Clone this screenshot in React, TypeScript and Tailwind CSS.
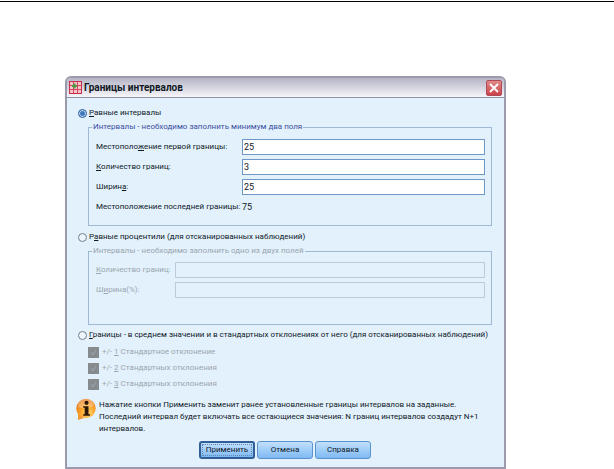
import { useState } from "react";
import type { ReactNode } from "react";

type Mode = "intervals" | "percentiles" | "deviations";

const DEVIATIONS = [
  { key: "1", text: "Стандартное отклонение" },
  { key: "2", text: "Стандартных отклонения" },
  { key: "3", text: "Стандартных отклонения" },
];

const GridIcon = () => (
  <svg width="13" height="13" viewBox="0 0 13 13" className="shrink-0">
    <rect x="0.5" y="0.5" width="12" height="12" fill="#f7c3ca" stroke="#c62f48" />
    <path d="M4.5 1v11M8.5 1v11M1 4.5h11M1 8.5h11" stroke="#d8455e" />
    <path d="M5.5 2.5v5M3 5h5" stroke="#4d9a43" strokeWidth="2" />
  </svg>
);

const CloseIcon = () => (
  <svg width="10" height="10" viewBox="0 0 10 10">
    <path d="M1 1l8 8M9 1l-8 8" stroke="#fff" strokeWidth="1.8" />
  </svg>
);

const InfoIcon = () => (
  <svg width="20" height="23" viewBox="0 0 20 23" className="shrink-0">
    <defs>
      <radialGradient id="info" cx="0.6" cy="0.75" r="0.75">
        <stop offset="0" stopColor="#ffd873" />
        <stop offset="0.5" stopColor="#fba62c" />
        <stop offset="1" stopColor="#e5730f" />
      </radialGradient>
    </defs>
    <path d="M2 15v7l6-2z" fill="#f3992f" />
    <circle cx="10" cy="10.5" r="9.7" fill="url(#info)" />
    <path d="M2 9a8 8 0 0 1 16-1q-8 4-16 1z" fill="#fff" opacity="0.3" />
    <circle cx="10.5" cy="4.8" r="2.1" fill="#2c1606" />
    <path d="M7.2 8.2h5.3v8h1.5v1.6H7.2v-1.6h1.5V9.8H7.2z" fill="#2c1606" />
  </svg>
);

const CheckMark = () => (
  <svg width="7" height="7" viewBox="0 0 7 7" className="pointer-events-none col-start-1 row-start-1">
    <path d="M1 3l2 3 3-5" fill="none" stroke="#a0a5a8" />
  </svg>
);

interface ModeRadioProps {
  value: Mode;
  mode: Mode;
  onChange: (mode: Mode) => void;
  children: ReactNode;
}

const ModeRadio = ({ value, mode, onChange, children }: ModeRadioProps) => (
  <label className="flex h-3 items-center gap-[2px] whitespace-nowrap">
    <input
      type="radio"
      name="mode"
      checked={mode === value}
      onChange={() => onChange(value)}
      className="size-[9px] shrink-0 appearance-none rounded-full border border-[#6f7f8e] bg-[#eef5fa] checked:border-[#3f6ea8] checked:bg-[#3f78bd] checked:shadow-[inset_0_0_0_1px_#c5dcf0]"
    />
    <span>{children}</span>
  </label>
);

interface FieldProps {
  id: string;
  label: ReactNode;
  value: string;
  onChange: (value: string) => void;
}

const Field = ({ id, label, value, onChange }: FieldProps) => (
  <div className="flex items-center">
    <label htmlFor={id} className="w-[146px] shrink-0 whitespace-nowrap">
      {label}
    </label>
    <input
      id={id}
      value={value}
      onChange={(e) => onChange(e.target.value)}
      className="h-4 min-w-0 flex-1 border border-[#6f98c8] bg-white px-px text-[9px]"
    />
  </div>
);

const App = () => {
  const [mode, setMode] = useState<Mode>("intervals");
  const [first, setFirst] = useState("25");
  const [count, setCount] = useState("3");
  const [width, setWidth] = useState("25");

  const last = Number(first) + (Number(count) - 1) * Number(width);
  const buttonClass =
    "h-[18px] w-14 rounded-[3px] border border-[#5b93cc] bg-linear-to-b from-[#c3e0fa] via-[#9fcdf8] to-[#7fb9f3]";

  return (
    <div className="bg-white pt-px font-[Roboto,'Liberation_Sans',sans-serif] text-[8px] leading-3 text-[#10181f]">
      <hr className="border-black" />
      <div className="pt-[74px] pr-[108px] pl-[65px]">
        <div className="rounded-t-md border-2 border-[#9c9bae] bg-[#e2f1fc]">
          <header className="flex h-5 items-center gap-[2px] rounded-t border-b border-[#8d94a8] bg-linear-to-b from-[#b5b4c6] to-[#f6f6fa] px-[2px]">
            <GridIcon />
            <h1 className="flex-1 text-[10px] font-bold">Границы интервалов</h1>
            <button
              aria-label="Закрыть"
              className="grid size-4 place-items-center rounded-[2px] border border-[#b04a58] bg-linear-to-b from-[#e08a8a] to-[#cc3f48]"
            >
              <CloseIcon />
            </button>
          </header>

          <form className="pt-[9px] pr-3 pb-2 pl-[11px]" onSubmit={(e) => e.preventDefault()}>
            <ModeRadio value="intervals" mode={mode} onChange={setMode}>
              <u>Р</u>авные интервалы
            </ModeRadio>
            <fieldset className="mt-[2px] ml-[10px] border border-[#9db9d3] pr-[6px] pb-[10px] pl-[7px]">
              <legend className="-ml-1 px-px text-[#3c4fa0]">
                Интервалы - необходимо заполнить минимум два поля
              </legend>
              <div className="flex flex-col gap-1 pt-[6px]">
                <Field
                  id="first"
                  label={<>Местополо<u>ж</u>ение первой границы:</>}
                  value={first}
                  onChange={setFirst}
                />
                <Field
                  id="count"
                  label={<><u>К</u>оличество границ:</>}
                  value={count}
                  onChange={setCount}
                />
                <Field
                  id="width"
                  label={<>Ширин<u>а</u>:</>}
                  value={width}
                  onChange={setWidth}
                />
                <div className="flex h-4 items-center">
                  <span className="w-[146px] whitespace-nowrap">Местоположение последней границы:</span>
                  <output className="text-[9px]">{last}</output>
                </div>
              </div>
            </fieldset>

            <div className="mt-[5px]">
              <ModeRadio value="percentiles" mode={mode} onChange={setMode}>
                Р<u>а</u>вные процентили (для отсканированных наблюдений)
              </ModeRadio>
            </div>
            <fieldset
              disabled
              className="mt-[2px] ml-[10px] border border-[#9db9d3] pr-[6px] pb-[26px] pl-[7px] text-[#9ba5ae]"
            >
              <legend className="-ml-1 px-px">Интервалы - необходимо заполнить одно из двух полей</legend>
              <div className="flex flex-col gap-1 pt-[5px]">
                <div className="flex items-center">
                  <label htmlFor="pcount" className="w-[79px] shrink-0 whitespace-nowrap">
                    <u>К</u>оличество границ:
                  </label>
                  <input id="pcount" className="h-4 min-w-0 flex-1 border border-[#bccbd7]" />
                </div>
                <div className="flex items-center">
                  <label htmlFor="pwidth" className="w-[79px] shrink-0 whitespace-nowrap">
                    Ш<u>и</u>рина(%):
                  </label>
                  <input id="pwidth" className="h-4 min-w-0 flex-1 border border-[#bccbd7]" />
                </div>
              </div>
            </fieldset>

            <div className="mt-1">
              <ModeRadio value="deviations" mode={mode} onChange={setMode}>
                <u>Г</u>раницы - в среднем значении и в стандартных отклонениях от него (для отсканированных наблюдений)
              </ModeRadio>
            </div>
            <div className="mt-[5px] ml-[10px] flex flex-col gap-1 text-[#9ba5ae]">
              {DEVIATIONS.map((item) => (
                <label key={item.key} className="flex h-3 items-center gap-[3px]">
                  <span className="grid place-items-center">
                    <input
                      type="checkbox"
                      disabled
                      className="col-start-1 row-start-1 size-[11px] appearance-none bg-[#858b8f]"
                    />
                    <CheckMark />
                  </span>
                  <span>
                    +/- <u>{item.key}</u> {item.text}
                  </span>
                </label>
              ))}
            </div>

            <div className="mt-2 -ml-[2px] flex gap-[3px]">
              <InfoIcon />
              <p className="pt-px">
                Нажатие кнопки Применить заменит ранее установленные границы интервалов на заданные.
                <br />
                Последний интервал будет включать все остающиеся значения: N границ интервалов создадут N+1
                интервалов.
              </p>
            </div>

            <div className="mt-[6px] flex justify-center gap-[2px]">
              <button
                type="submit"
                className="h-[18px] w-14 rounded-[3px] border-2 border-[#2f5f96] bg-linear-to-b from-[#c3e0fa] to-[#7fb9f3] leading-none outline-1 -outline-offset-4 outline-dotted outline-[#5b86b5]"
              >
                Применить
              </button>
              <button type="button" className={buttonClass}>
                Отмена
              </button>
              <button type="button" className={buttonClass}>
                Справка
              </button>
            </div>
          </form>
        </div>
      </div>
    </div>
  );
};

export default App;
